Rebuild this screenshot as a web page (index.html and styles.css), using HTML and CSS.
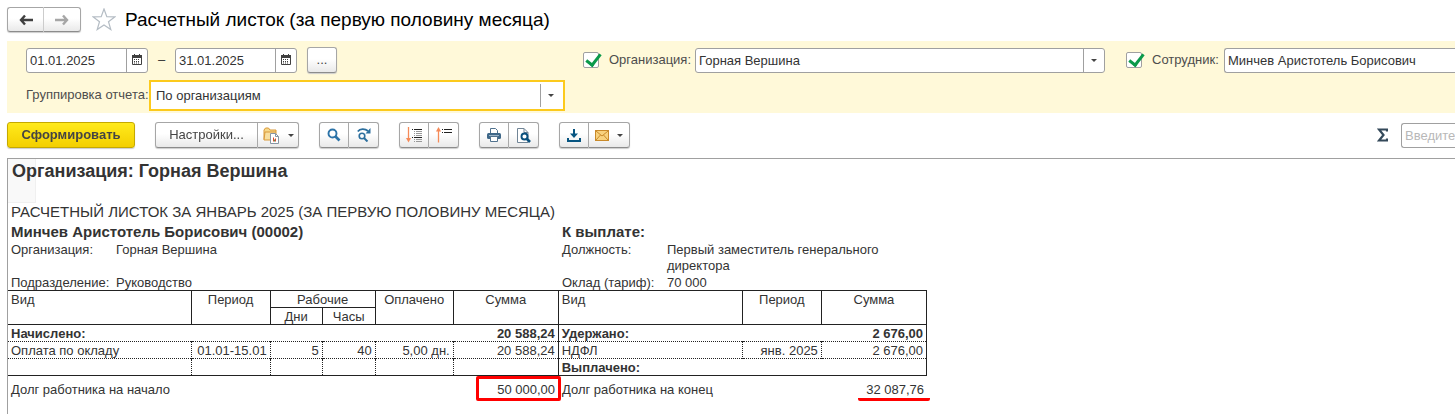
FILE: index.html
```html
<!DOCTYPE html>
<html lang="ru">
<head>
<meta charset="utf-8">
<title>Расчетный листок</title>
<link rel="stylesheet" href="styles.css">
</head>
<body>
<header class="titlebar">
  <div class="group nav">
    <button class="btn" aria-label="Назад"><svg width="14" height="12" viewBox="0 0 14 12"><path d="M6 1.500L2 6l4 4.500M2 6h12" fill="none" stroke="#404040" stroke-width="2.4"/></svg></button>
    <button class="btn" aria-label="Вперед"><svg width="14" height="12" viewBox="0 0 14 12"><path d="M8 1.500l4 4.500-4 4.500M12 6H0" fill="none" stroke="#a6a6a6" stroke-width="2.4"/></svg></button>
  </div>
  <svg class="star" width="24" height="23" viewBox="0 0 24 23"><path d="M12 1l2.800 7.600 8.200.2-6.500 4.900L18.800 21.500 12 17l-6.800 4.500 2.300-7.800L1 8.800l8.200-.2z" fill="#fff" stroke="#b4bcc4" stroke-width="1.200"/></svg>
  <h1 class="title">Расчетный листок (за первую половину месяца)</h1>
</header>

<section class="filters">
  <div class="filter-row">
    <div class="period">
      <div class="field date"><input class="input" type="text" value="01.01.2025" aria-label="Начало периода"><button class="drop" aria-label="Календарь"><svg width="10" height="11" viewBox="0 0 10 11"><path d="M.5 2v8.500h9V2" fill="#fff" stroke="#404040"/><path d="M0 1h10v3H0zM2 0h1v2H2zM7 0h1v2H7z" fill="#404040"/><path d="M2 5.500h6M2 7.500h6M2 9h6" stroke="#404040" stroke-dasharray="1 1"/></svg></button></div>
      <span class="dash">–</span>
      <div class="field date"><input class="input" type="text" value="31.01.2025" aria-label="Конец периода"><button class="drop" aria-label="Календарь"><svg width="10" height="11" viewBox="0 0 10 11"><path d="M.5 2v8.500h9V2" fill="#fff" stroke="#404040"/><path d="M0 1h10v3H0zM2 0h1v2H2zM7 0h1v2H7z" fill="#404040"/><path d="M2 5.500h6M2 7.500h6M2 9h6" stroke="#404040" stroke-dasharray="1 1"/></svg></button></div>
      <button class="btn more">...</button>
    </div>
    <div class="org">
      <input class="check" type="checkbox" id="use-org" checked>
      <label class="label" for="use-org">Организация:</label>
      <div class="field grow"><input class="input" type="text" value="Горная Вершина" aria-label="Организация"><button class="drop" aria-label="Выбрать"><i class="caret"></i></button></div>
    </div>
    <div class="employee">
      <input class="check" type="checkbox" id="use-emp" checked>
      <label class="label" for="use-emp">Сотрудник:</label>
      <div class="field grow cut"><input class="input" type="text" value="Минчев Аристотель Борисович" aria-label="Сотрудник"></div>
    </div>
  </div>
  <div class="filter-row grouping">
    <label class="label" for="grouping">Группировка отчета:</label>
    <div class="field focused"><input class="input" type="text" id="grouping" value="По организациям" autofocus><button class="drop" aria-label="Выбрать"><i class="caret"></i></button></div>
  </div>
</section>

<div class="toolbar">
  <button class="btn primary">Сформировать</button>
  <div class="group">
    <button class="btn settings">Настройки...</button>
    <button class="btn menu" aria-label="Варианты отчета"><svg width="17" height="17" viewBox="0 0 17 17"><path d="M1 12.500V3l1.500-2h3L7 3h6v2" fill="#f6d88a" stroke="#d9993a"/><path d="M1 13l1-8h11v8z" fill="#f8dfa0" stroke="#d9993a"/><path d="M7.500 6.500h5l3 3v7h-8z" fill="#fff" stroke="#8796a5"/><path d="M12.500 6.500v3h3" fill="none" stroke="#8796a5"/><path d="M10.500 14.500v-4M12.500 14.500v-3" stroke="#e0452c"/><path d="M11.500 14.500v-2" stroke="#3c9a54"/></svg><i class="caret"></i></button>
  </div>
  <div class="group">
    <button class="btn tool" aria-label="Найти"><svg width="14" height="14" viewBox="0 0 14 14"><circle cx="5.500" cy="5.500" r="4" fill="none" stroke="#2c73a8" stroke-width="1.900"/><path d="M8.500 8.500l4 4" stroke="#2c73a8" stroke-width="2.600"/></svg></button>
    <button class="btn tool" aria-label="Найти далее"><svg width="14" height="14" viewBox="0 0 14 14"><circle cx="5" cy="8" r="2.800" fill="none" stroke="#2c6f9e" stroke-width="1.600"/><path d="M7 10l3.500 3.500" stroke="#2c6f9e" stroke-width="2"/><path d="M.8 3.500C3 .3 8 .3 11 3" fill="none" stroke="#2c6f9e" stroke-width="1.800"/><path d="M13.500 0v5.500H8.500z" fill="#2c6f9e"/></svg></button>
  </div>
  <div class="group">
    <button class="btn tool" aria-label="Развернуть"><svg width="16" height="16" viewBox="0 0 16 16"><path d="M2.500 0v13" stroke="#f58a58" stroke-width="1.300"/><path d="M0 11h5l-2.500 4.500z" fill="#f58a58"/><path d="M6 2.500h1M8 2.500h8M6 10.500h1M8 10.500h8" stroke="#222"/><path d="M8 4.500h1M10 4.500h6M8 6.500h1M10 6.500h6M8 8.500h1M10 8.500h6M8 12.500h1M10 12.500h6M8 14.500h1M10 14.500h6" stroke="#999"/></svg></button>
    <button class="btn tool" aria-label="Свернуть"><svg width="16" height="16" viewBox="0 0 16 16"><path d="M2.500 15.500V3" stroke="#f58a58" stroke-width="1.300"/><path d="M0 4.500h5L2.500 0z" fill="#f58a58"/><path d="M6 2.500h1M8 2.500h8M6 5.500h1M8 5.500h8" stroke="#222"/></svg></button>
  </div>
  <div class="group">
    <button class="btn tool" aria-label="Печать"><svg width="14" height="14" viewBox="0 0 14 14"><path d="M3.500 5V.5h5l2 2V5" fill="#fff" stroke="#51728e"/><rect y="5" width="14" height="6" rx="1.500" fill="#3f6889"/><path d="M2 7.500h10" stroke="#9bb4c8"/><path d="M3.500 8.500h7v5h-7z" fill="#fff" stroke="#51728e"/></svg></button>
    <button class="btn tool" aria-label="Предварительный просмотр"><svg width="15" height="15" viewBox="0 0 15 15"><path d="M1.500 14.500V.5H8l4 4v10z" fill="#fff" stroke="#718596"/><path d="M8 .5v4h4" fill="none" stroke="#718596"/><circle cx="8.500" cy="8.500" r="3" fill="#fff" stroke="#09507d" stroke-width="1.900"/><path d="M10.500 10.500l3.500 3.500" stroke="#09507d" stroke-width="2.600"/></svg></button>
  </div>
  <div class="group">
    <button class="btn tool" aria-label="Сохранить"><svg width="14" height="13" viewBox="0 0 14 13"><path d="M7 0v6" stroke="#075581" stroke-width="2"/><path d="M3 4.500h8L7 9z" fill="#075581"/><path d="M1 9v3h12V9" fill="none" stroke="#075581" stroke-width="2"/></svg></button>
    <button class="btn menu" aria-label="Отправить"><svg width="14" height="11" viewBox="0 0 14 11"><rect x=".5" y=".5" width="13" height="10" fill="#f8d27e" stroke="#c98a2a"/><path d="M1 1l6 5 6-5M1 10l4.500-5M13 10L8.500 5" fill="none" stroke="#c98a2a"/></svg><i class="caret"></i></button>
  </div>
  <div class="sum">
    <svg width="11" height="14" viewBox="0 0 11 14"><path d="M10 3.500V1.500H2l4.500 5.500L2 12.500h8v-2" fill="none" stroke="#34495a" stroke-width="2.200"/></svg>
    <div class="field grow cut"><input class="input" type="text" placeholder="Введите" aria-label="Поиск"></div>
  </div>
</div>

<main class="sheet">
  <h2 class="org-name">Организация: Горная Вершина</h2>
  <p class="heading">РАСЧЕТНЫЙ ЛИСТОК ЗА ЯНВАРЬ 2025 (ЗА ПЕРВУЮ ПОЛОВИНУ МЕСЯЦА)</p>
  <div class="info">
    <strong class="name">Минчев Аристотель Борисович (00002)</strong>
    <strong class="name">К выплате:</strong>
    <span>Организация:</span><span>Горная Вершина</span>
    <span>Должность:</span><span class="post">Первый заместитель генерального директора</span>
    <span>Подразделение:</span><span>Руководство</span>
    <span>Оклад (тариф):</span><span>70 000</span>
  </div>
  <table class="slip">
    <colgroup><col class="c-kind"><col class="c-period"><col class="c-days"><col class="c-hours"><col class="c-paid"><col class="c-sum"><col class="c-kind2"><col class="c-period"><col class="c-sum"></colgroup>
    <thead>
      <tr><th class="left" rowspan="2">Вид</th><th rowspan="2">Период</th><th colspan="2">Рабочие</th><th rowspan="2">Оплачено</th><th rowspan="2">Сумма</th><th class="left" rowspan="2">Вид</th><th rowspan="2">Период</th><th rowspan="2">Сумма</th></tr>
      <tr><th>Дни</th><th>Часы</th></tr>
    </thead>
    <tbody>
      <tr class="total"><td colspan="5">Начислено:</td><td class="num half">20 588,24</td><td colspan="2">Удержано:</td><td class="num">2 676,00</td></tr>
      <tr class="detail"><td>Оплата по окладу</td><td class="num dot">01.01-15.01</td><td class="num dot">5</td><td class="num dot">40</td><td class="num dot">5,00 дн.</td><td class="num dot half">20 588,24</td><td>НДФЛ</td><td class="num dot">янв. 2025</td><td class="num dot">2 676,00</td></tr>
      <tr class="detail last"><td></td><td class="dot"></td><td class="dot"></td><td class="dot"></td><td class="dot"></td><td class="dot half"></td><td class="bold" colspan="3">Выплачено:</td></tr>
    </tbody>
  </table>
  <div class="debts">
    <span class="debt">Долг работника на начало</span><span class="amount boxed">50 000,00</span>
    <span class="debt second">Долг работника на конец</span><span class="amount underlined">32 087,76</span>
  </div>
</main>
</body>
</html>
```
FILE: styles.css
```css
* { box-sizing: border-box; }
body { margin: 0; background: #fff; color: #333; font: 13px/16px "Liberation Sans", Arial, sans-serif; overflow: hidden; }
button, input { font: inherit; color: inherit; margin: 0; }
h1, h2, p { margin: 0; }

.titlebar { display: flex; align-items: center; height: 41px; padding: 0 0 2px 7px; }
.title { margin-left: 9px; color: #000; font-size: 19px; line-height: 24px; font-weight: 400; white-space: nowrap; }
.star { margin-left: 11px; }

.btn { display: flex; align-items: center; justify-content: center; height: 26px; padding: 0; border: 1px solid #a6a6a6; border-bottom-color: #8c8c8c; border-radius: 3px; background: linear-gradient(#fff 45%, #e9e9e9); color: #444; box-shadow: 0 1px 1px #ccc; }
.group { display: flex; flex: none; }
.group .btn:first-child { border-radius: 3px 0 0 3px; }
.group .btn + .btn { border-left: 0; border-radius: 0 3px 3px 0; }
.nav .btn { width: 37px; height: 25px; }
.nav .btn:first-child { border-right-color: #ccc; }

.filters { margin-left: 7px; padding: 6px 0 2px 19px; background: #fff9d9; }
.filter-row { display: flex; align-items: center; height: 26px; }
.period { display: flex; align-items: center; flex: none; width: 557px; }
.field { display: flex; height: 25px; border: 1px solid #a0a0a0; border-radius: 3px; background: #fff; }
.input { flex: 1; min-width: 0; padding: 1px 0 0 3px; border: 0; background: none; outline: 0; }
.input::placeholder { color: #b8b8b8; }
.grow { flex: 1; min-width: 0; }
.cut { border-right: 0; border-radius: 3px 0 0 3px; }
.date { width: 122px; }
.drop { display: flex; align-items: center; justify-content: center; width: 21px; padding: 0; border: 0; border-left: 1px solid #a0a0a0; background: none; }
.date .drop { padding-bottom: 2px; }
.dash { width: 27px; text-align: center; }
.more { width: 30px; margin-left: 10px; }
.label { color: #4d4d4d; white-space: nowrap; }
.caret { border: 3px solid transparent; border-top-color: #444; border-bottom: 0; }
.org { display: flex; align-items: center; flex: 522 1 0; }
.employee { display: flex; align-items: center; flex: none; width: 329px; margin-left: 21px; }
.org .label { width: 86px; }
.employee .label { width: 72px; }
.check { flex: none; appearance: none; width: 16px; height: 16px; margin-right: 10px; border: 1px solid #a0a0a0; border-radius: 2px; background: #fff; position: relative; }
.check:checked::after { content: ""; position: absolute; left: 5px; top: -2px; width: 6px; height: 12px; border: solid #0b9a4a; border-width: 0 3px 3px 0; transform: rotate(38deg); }
.grouping { height: 32px; margin-top: 6px; }
.grouping .label { width: 123px; }
.focused { width: 416px; height: 31px; padding: 2px 0 2px 2px; border: 2px solid #fcca1d; border-radius: 0; }
.focused .drop { width: 23px; padding-right: 3px; }

.toolbar { display: flex; align-items: center; height: 45px; padding: 0 0 1px 7px; gap: 20px; }
.primary { width: 128px; border-color: #c5a900; background: linear-gradient(#ffea1c, #f3cf00); color: #444; font-weight: 700; }
.settings { width: 103px; }
.tool { width: 30px; }
.menu { width: 41px; gap: 8px; }
.sum { display: flex; align-items: center; flex: none; width: 78px; margin-left: auto; gap: 13px; }

.sheet { margin-left: 7px; min-height: 256px; border: solid #a0a0a0; border-width: 1px 0 0 1px; background: linear-gradient(#f9f9f9, #f9f9f9) 0 0 / 27px 43px no-repeat, linear-gradient(#f0f0f0, #f0f0f0) 0 0 / 28px 44px no-repeat; }
.org-name { padding: 0 4px; font-size: 18px; line-height: 24px; height: 43px; }
.heading { padding-left: 3px; font-size: 15px; line-height: 19px; }
.info { display: grid; grid-template-columns: 105px 446px 105px 240px; padding-left: 3px; }
.name { grid-column: span 2; font-size: 15px; line-height: 21px; }
.post { width: 220px; min-height: 33px; }
.slip { table-layout: fixed; width: 919px; border-collapse: collapse; margin-top: -1px; }
.c-kind { width: 183px; }
.c-period { width: 79px; }
.c-days { width: 52px; }
.c-hours { width: 53px; }
.c-paid { width: 78px; }
.c-sum { width: 105px; }
.c-kind2 { width: 184px; }
.slip th, .slip td { height: 17px; padding: 1px 3px 0; line-height: 15px; vertical-align: top; white-space: nowrap; text-align: left; }
.slip th { border: 1px solid #222; font-weight: 400; text-align: center; }
.slip th:first-child[rowspan] { border-left: 0; }
.slip .left { text-align: left; }
.slip tr { border-right: 1px solid #222; }
.slip .num { text-align: right; }
.slip .half { border-right: 1px solid #222; }
.slip .dot { border-left: 1px dotted #222; }
.total, .bold { font-weight: 700; }
.detail { border-top: 1px dotted #222; }
.last { border-bottom: 1px solid #222; }
.debts { display: grid; grid-template-columns: 468px 85px 297px 72px; align-items: start; line-height: 27px; }
.debt { padding-left: 3px; }
.second { padding-left: 1px; }
.amount { text-align: right; white-space: nowrap; }
.boxed { height: 25px; padding-right: 3px; border: 3px solid #f00; border-radius: 2px; line-height: 21px; }
.underlined { height: 25px; padding-right: 6px; border-bottom: 3px solid #f00; border-radius: 2px; }
```
